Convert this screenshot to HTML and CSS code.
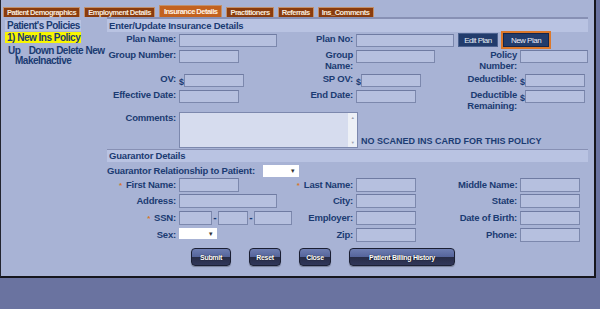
FILE: index.html
```html
<!DOCTYPE html>
<html lang="en">
<head>
    <meta charset="UTF-8">
    <title>Insurance Details</title>
    <link rel="stylesheet" href="styles.css">
</head>
<body>
    <div class="panel">
        <div class="tabs">
            <span class="tab">Patient Demographics</span>
            <span class="tab">Employment Details</span>
            <span class="tab active">Insurance Details</span>
            <span class="tab">Practitioners</span>
            <span class="tab">Referrals</span>
            <span class="tab">Ins_Comments</span>
        </div>
        <div class="content">
            <aside class="policies">
                <div class="policies-title">Patient's Policies</div>
                <div class="policy-item">1) New Ins Policy</div>
                <div class="policy-actions">
                    <a href="#" class="up">Up</a> <a href="#">Down</a> <a href="#">Delete</a> <a href="#">New</a>
                </div>
                <div class="policy-actions second"><a href="#">MakeInactive</a></div>
            </aside>
            <section class="details">
                <h2 class="band">Enter/Update Insurance Details</h2>
                <div class="ins-grid">
                    <label class="lbl">Plan Name:</label>
                    <div class="field"><input class="inp w98"></div>
                    <label class="lbl">Plan No:</label>
                    <div class="field"><input class="inp w98"></div>
                    <div class="plan-btns">
                        <button class="plan-btn">Edit Plan</button>
                        <span class="plan-focus"><button class="plan-btn">New Plan</button></span>
                    </div>

                    <label class="lbl">Group Number:</label>
                    <div class="field"><input class="inp w60"></div>
                    <label class="lbl">Group<br>Name:</label>
                    <div class="field"><input class="inp w79"></div>
                    <label class="lbl">Policy<br>Number:</label>
                    <div class="field"><input class="inp w68"></div>

                    <label class="lbl">OV:</label>
                    <div class="field"><span class="cur">$</span><input class="inp w60"></div>
                    <label class="lbl">SP OV:</label>
                    <div class="field"><span class="cur">$</span><input class="inp w60"></div>
                    <label class="lbl">Deductible:</label>
                    <div class="field"><span class="cur">$</span><input class="inp w60"></div>

                    <label class="lbl">Effective Date:</label>
                    <div class="field"><input class="inp w60"></div>
                    <label class="lbl">End Date:</label>
                    <div class="field"><input class="inp w60"></div>
                    <label class="lbl">Deductible<br>Remaining:</label>
                    <div class="field"><span class="cur">$</span><input class="inp w60"></div>

                    <label class="lbl">Comments:</label>
                    <div class="comments-cell">
                        <div class="comments-box">
                            <textarea></textarea>
                            <div class="scroll"><span>&#9650;</span><span>&#9660;</span></div>
                        </div>
                        <span class="no-card">NO SCANED INS CARD FOR THIS POLICY</span>
                    </div>
                </div>

                <h2 class="band sub">Guarantor Details</h2>
                <div class="rel-row">
                    <label class="lbl">Guarantor Relationship to Patient:</label>
                    <span class="select w36"><select></select></span>
                </div>
                <div class="ins-grid g-grid">
                    <label class="lbl"><span class="req">*</span>First Name:</label>
                    <div class="field"><input class="inp w60"></div>
                    <label class="lbl"><span class="req">*</span>Last Name:</label>
                    <div class="field"><input class="inp w60"></div>
                    <label class="lbl">Middle Name:</label>
                    <div class="field"><input class="inp w60"></div>

                    <label class="lbl">Address:</label>
                    <div class="field"><input class="inp w98"></div>
                    <label class="lbl">City:</label>
                    <div class="field"><input class="inp w60"></div>
                    <label class="lbl">State:</label>
                    <div class="field"><input class="inp w60"></div>

                    <label class="lbl"><span class="req">*</span>SSN:</label>
                    <div class="field ssn">
                        <input class="inp w33"><span class="dash">-</span><input class="inp w30"><span class="dash">-</span><input class="inp w38">
                    </div>
                    <label class="lbl">Employer:</label>
                    <div class="field"><input class="inp w60"></div>
                    <label class="lbl">Date of Birth:</label>
                    <div class="field"><input class="inp w60"></div>

                    <label class="lbl">Sex:</label>
                    <div class="field"><span class="select w38"><select></select></span></div>
                    <label class="lbl">Zip:</label>
                    <div class="field"><input class="inp w60"></div>
                    <label class="lbl">Phone:</label>
                    <div class="field"><input class="inp w60"></div>
                </div>
            </section>
        </div>
        <div class="actions">
            <button class="btn w40">Submit</button>
            <button class="btn w32">Reset</button>
            <button class="btn w32">Close</button>
            <button class="btn w106">Patient Billing History</button>
        </div>
    </div>
</body>
</html>
```

FILE: styles.css
```css
:root {
    --panel-bg: #a8b3d5;
    --band-bg: #b9c3e2;
    --input-bg: #b6c0df;
    --input-border: #7c88ad;
    --label-color: #1b3b72;
    --outer-bg: #6a73a0;
}

body {
    margin: 0;
    background-color: var(--outer-bg);
    font-family: "Liberation Sans", Arial, sans-serif;
}

.panel {
    width: 596px;
    box-sizing: border-box;
    background-color: var(--panel-bg);
    border-left: 1px solid #22242f;
    border-right: 2px solid #15161d;
    border-bottom: 2px solid #15161d;
    padding-bottom: 10px;
}

/* tabs */
.tabs {
    display: flex;
    align-items: flex-end;
    gap: 4px;
    height: 17px;
    box-sizing: border-box;
    padding-left: 2px;
}

.tab {
    height: 9px;
    line-height: 9px;
    padding: 0 3px;
    font-size: 7.6px;
    font-weight: bold;
    letter-spacing: -0.55px;
    color: #f6e9dc;
    background-color: #8a3c0e;
    border: 1px solid #c2906a;
    border-bottom: 0;
}

.tab.active {
    height: 11px;
    line-height: 11px;
    padding: 0 4px;
    background-color: #c3621f;
    color: #fff3e3;
}

.content {
    display: flex;
}

/* left column */
.policies {
    width: 106px;
    padding-top: 3px;
    color: var(--label-color);
    font-size: 10px;
    font-weight: bold;
    letter-spacing: -0.5px;
}

.policies-title {
    margin-left: 4px;
    width: 76px;
    height: 11px;
    line-height: 11px;
    padding-left: 2px;
    box-sizing: border-box;
    background-color: var(--band-bg);
}

.policy-item {
    margin: 1px 0 0 4px;
    width: 76px;
    height: 11px;
    line-height: 11px;
    padding-left: 2px;
    box-sizing: border-box;
    background-color: #f8f500;
}

.policy-actions {
    margin-top: 3px;
    padding-left: 7px;
    line-height: 10px;
    white-space: nowrap;
}

.policy-actions.second {
    margin-top: 0;
    padding-left: 14px;
}

.policy-actions a {
    color: var(--label-color);
    text-decoration: none;
}

.policy-actions .up {
    margin-right: 6px;
}

/* right column */
.details {
    width: 481px;
}

.band {
    margin: 0;
    height: 13px;
    line-height: 13px;
    padding-left: 2px;
    font-size: 9.5px;
    font-weight: bold;
    letter-spacing: -0.2px;
    color: var(--label-color);
    background-color: var(--band-bg);
    border-top: 2px solid #8790b4;
}

.band.sub {
    height: 12px;
    line-height: 12px;
    border-top-width: 1px;
}

.ins-grid {
    display: grid;
    grid-template-columns: 69px 113px 58px 99px 59px 69px;
    grid-template-rows: 16px 24px 16px 23px 37px;
    column-gap: 3px;
    margin-top: 1px;
}

.lbl {
    text-align: right;
    font-size: 9.5px;
    font-weight: bold;
    letter-spacing: -0.2px;
    line-height: 11px;
    color: var(--label-color);
    white-space: nowrap;
}

.field {
    display: flex;
    align-items: flex-start;
}

.inp {
    height: 13px;
    box-sizing: border-box;
    margin: 1px 0 0;
    padding: 0;
    border: 1px solid var(--input-border);
    border-top-color: #6f7ba2;
    background-color: var(--input-bg);
}

.w98 { width: 98px; }
.w79 { width: 79px; }
.w68 { width: 68px; }
.w60 { width: 60px; }
.w38 { width: 38px; }
.w36 { width: 36px; }
.w33 { width: 33px; }
.w30 { width: 30px; }

.cur {
    width: 5px;
    margin-top: 4px;
    font-size: 9px;
    font-weight: bold;
    color: var(--label-color);
}

.plan-btns {
    grid-column: span 2;
    display: flex;
    align-items: flex-start;
    gap: 3px;
}

.plan-btn {
    height: 14px;
    padding: 0;
    font-family: inherit;
    font-size: 8px;
    letter-spacing: -0.5px;
    white-space: nowrap;
    color: #e8ecf6;
    background-color: #223c6c;
    border: 1px solid #4c6290;
}

.plan-btn:first-child {
    width: 40px;
}

.plan-focus {
    margin-top: -2px;
    border: 2px solid #dc782a;
}

.plan-focus .plan-btn {
    display: block;
    width: 46px;
    border-color: #15264a;
}

.comments-cell {
    grid-column: 2 / 7;
    display: flex;
    align-items: flex-end;
    gap: 3px;
    height: 36px;
}

.comments-box {
    display: flex;
    width: 179px;
    height: 36px;
    box-sizing: border-box;
    border: 1px solid var(--input-border);
    background-color: #d6dcee;
}

.comments-box textarea {
    flex-grow: 1;
    margin: 0;
    padding: 0;
    border: none;
    resize: none;
    background-color: transparent;
}

.scroll {
    width: 9px;
    display: flex;
    flex-direction: column;
    justify-content: space-between;
    align-items: center;
    background-color: #edf0f6;
    font-size: 4px;
    color: #9aa0b0;
    padding: 2px 0;
}

.no-card {
    margin-bottom: 1px;
    font-size: 9px;
    line-height: 11px;
    font-weight: bold;
    color: var(--label-color);
    white-space: nowrap;
}

/* guarantor */
.rel-row {
    display: flex;
    align-items: flex-start;
    gap: 8px;
    height: 12px;
    margin-top: 3px;
}

.rel-row .lbl {
    line-height: 12px;
}

.select {
    position: relative;
    display: block;
    height: 12px;
    background-color: #fff;
}

.select select {
    width: 100%;
    height: 100%;
    opacity: 0;
}

.select::after {
    content: '\25BE';
    position: absolute;
    right: 4px;
    top: 1px;
    font-size: 7px;
    line-height: 10px;
    color: #333;
}

.g-grid {
    grid-template-rows: 16px 17px 17px 16px;
}

.g-grid .lbl {
    padding-top: 1px;
}

.g-grid .inp {
    margin-top: 0;
    height: 14px;
}

.g-grid .select {
    margin-top: 0;
    height: 11px;
}

.req {
    margin-right: 4px;
    color: #d9772a;
    font-size: 8px;
}

.ssn .dash {
    width: 8px;
    text-align: center;
    font-size: 10px;
    font-weight: bold;
    color: var(--label-color);
    margin-top: 1px;
}

/* bottom buttons */
.actions {
    display: flex;
    gap: 18px;
    margin-top: 4px;
    padding-left: 190px;
}

.btn {
    height: 18px;
    padding: 0;
    font-family: inherit;
    font-size: 7px;
    font-weight: bold;
    letter-spacing: -0.3px;
    color: #fff;
    text-shadow: 0 0 1px #000;
    border: 1px solid #1b1f33;
    border-radius: 4px;
    background: linear-gradient(#6d7db1 0, #55649a 50%, #272c46 50%, #31375a 100%);
    box-shadow: 0 1px 1px rgba(0,0,0,0.3);
}

.w40 { width: 40px; }
.w32 { width: 32px; }
.w106 { width: 106px; }
```
